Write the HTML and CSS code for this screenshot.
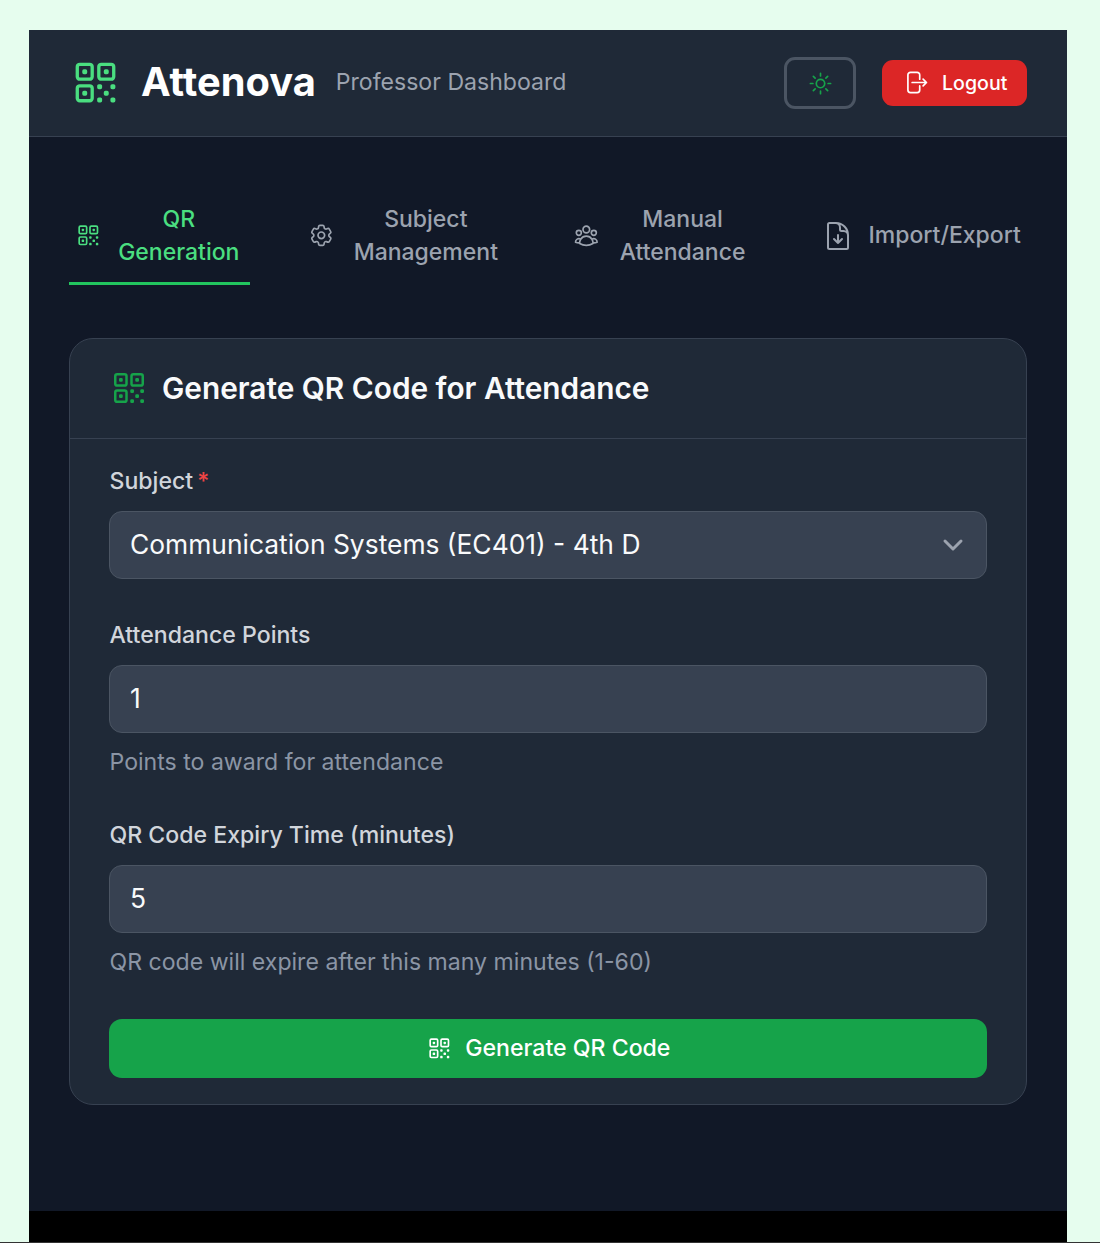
FILE: index.html
```html
<!DOCTYPE html>
<html lang="en">
<head>
  <meta charset="UTF-8">
  <meta name="viewport" content="width=device-width, initial-scale=1.0">
  <title>Attenova - Professor Dashboard</title>
  <link rel="stylesheet" href="styles.css">
</head>
<body>
  <svg class="icon-defs" width="0" height="0">
    <symbol id="qr" viewBox="0 0 24 24">
      <path d="M3.75 4.875c0-.621.504-1.125 1.125-1.125h4.5c.621 0 1.125.504 1.125 1.125v4.5c0 .621-.504 1.125-1.125 1.125h-4.5A1.125 1.125 0 0 1 3.75 9.375v-4.5ZM3.75 14.625c0-.621.504-1.125 1.125-1.125h4.5c.621 0 1.125.504 1.125 1.125v4.5c0 .621-.504 1.125-1.125 1.125h-4.5a1.125 1.125 0 0 1-1.125-1.125v-4.5ZM13.5 4.875c0-.621.504-1.125 1.125-1.125h4.5c.621 0 1.125.504 1.125 1.125v4.5c0 .621-.504 1.125-1.125 1.125h-4.5A1.125 1.125 0 0 1 13.5 9.375v-4.5Z"/>
      <path d="M6.75 6.75h.75v.75h-.75v-.75ZM6.75 16.5h.75v.75h-.75v-.75ZM16.5 6.75h.75v.75h-.75v-.75ZM13.5 13.5h.75v.75h-.75v-.75ZM13.5 19.5h.75v.75h-.75v-.75ZM19.5 13.5h.75v.75h-.75v-.75ZM19.5 19.5h.75v.75h-.75v-.75ZM16.5 16.5h.75v.75h-.75v-.75Z"/>
    </symbol>
    <symbol id="cog" viewBox="0 0 24 24">
      <path d="M9.594 3.94c.09-.542.56-.94 1.11-.94h2.593c.55 0 1.02.398 1.11.94l.213 1.281c.063.374.313.686.645.87.074.04.147.083.22.127.325.196.72.257 1.075.124l1.217-.456a1.125 1.125 0 0 1 1.37.49l1.296 2.247a1.125 1.125 0 0 1-.26 1.431l-1.003.827c-.293.241-.438.613-.43.992a7.723 7.723 0 0 1 0 .255c-.008.378.137.75.43.991l1.004.827c.424.35.534.955.26 1.43l-1.298 2.247a1.125 1.125 0 0 1-1.369.491l-1.217-.456c-.355-.133-.75-.072-1.076.124a6.47 6.47 0 0 1-.22.128c-.331.183-.581.495-.644.869l-.213 1.281c-.09.543-.56.94-1.11.94h-2.594c-.55 0-1.019-.398-1.11-.94l-.213-1.281c-.062-.374-.312-.686-.644-.87a6.52 6.52 0 0 1-.22-.127c-.325-.196-.72-.257-1.076-.124l-1.217.456a1.125 1.125 0 0 1-1.369-.49l-1.297-2.247a1.125 1.125 0 0 1 .26-1.431l1.004-.827c.292-.24.437-.613.43-.991a6.932 6.932 0 0 1 0-.255c.007-.38-.138-.751-.43-.992l-1.004-.827a1.125 1.125 0 0 1-.26-1.43l1.297-2.247a1.125 1.125 0 0 1 1.37-.491l1.216.456c.356.133.751.072 1.076-.124.072-.044.146-.086.22-.128.332-.183.582-.495.644-.869l.214-1.28Z"/>
      <path d="M15 12a3 3 0 1 1-6 0 3 3 0 0 1 6 0Z"/>
    </symbol>
    <symbol id="users" viewBox="0 0 24 24">
      <path d="M18 18.72a9.094 9.094 0 0 0 3.741-.479 3 3 0 0 0-4.682-2.72m.94 3.198.001.031c0 .225-.012.447-.037.666A11.944 11.944 0 0 1 12 21c-2.17 0-4.207-.576-5.963-1.584A6.062 6.062 0 0 1 6 18.719m12 0a5.971 5.971 0 0 0-.941-3.197m0 0A5.995 5.995 0 0 0 12 12.75a5.995 5.995 0 0 0-5.058 2.772m0 0a3 3 0 0 0-4.681 2.72 8.986 8.986 0 0 0 3.74.477m.94-3.197a5.971 5.971 0 0 0-.94 3.197M15 6.75a3 3 0 1 1-6 0 3 3 0 0 1 6 0Zm6 3a2.25 2.25 0 1 1-4.5 0 2.25 2.25 0 0 1 4.5 0Zm-13.5 0a2.25 2.25 0 1 1-4.5 0 2.25 2.25 0 0 1 4.5 0Z"/>
    </symbol>
    <symbol id="doc" viewBox="0 0 24 24">
      <path d="M19.5 14.25v-2.625a3.375 3.375 0 0 0-3.375-3.375h-1.5A1.125 1.125 0 0 1 13.5 7.125v-1.5a3.375 3.375 0 0 0-3.375-3.375H8.25m.75 12 3 3m0 0 3-3m-3 3v-6m-1.5-9H5.625c-.621 0-1.125.504-1.125 1.125v17.25c0 .621.504 1.125 1.125 1.125h12.75c.621 0 1.125-.504 1.125-1.125V11.25a9 9 0 0 0-9-9Z"/>
    </symbol>
    <symbol id="sun" viewBox="0 0 24 24">
      <path d="M12 3v2.25m6.364.386-1.591 1.591M21 12h-2.25m-.386 6.364-1.591-1.591M12 18.75V21m-4.773-4.227-1.591 1.591M5.25 12H3m4.227-4.773L5.636 5.636M15.75 12a3.75 3.75 0 1 1-7.5 0 3.75 3.75 0 0 1 7.5 0Z"/>
    </symbol>
    <symbol id="logout" viewBox="0 0 24 24">
      <path d="M15.75 9V5.25A2.25 2.25 0 0 0 13.5 3h-6a2.25 2.25 0 0 0-2.25 2.25v13.5A2.25 2.25 0 0 0 7.5 21h6a2.25 2.25 0 0 0 2.25-2.25V15m3 0 3-3m0 0-3-3m3 3H9"/>
    </symbol>
  </svg>

  <div class="app">
    <header class="topbar">
      <div class="brand">
        <svg class="icon brand-icon"><use href="#qr"/></svg>
        <h1>Attenova</h1>
        <span class="brand-sub">Professor Dashboard</span>
      </div>
      <div class="topbar-actions">
        <button type="button" class="theme-btn"><svg class="icon sun-icon"><use href="#sun"/></svg></button>
        <button type="button" class="logout-btn"><svg class="icon logout-icon"><use href="#logout"/></svg>Logout</button>
      </div>
    </header>

    <main class="content">
      <nav class="tabs">
        <a class="tab tab-qr active"><svg class="icon tab-icon"><use href="#qr"/></svg><span>QR<br>Generation</span></a>
        <a class="tab tab-subject"><svg class="icon tab-icon"><use href="#cog"/></svg><span>Subject<br>Management</span></a>
        <a class="tab tab-manual"><svg class="icon tab-icon"><use href="#users"/></svg><span>Manual<br>Attendance</span></a>
        <a class="tab tab-import"><svg class="icon doc-icon"><use href="#doc"/></svg><span>Import/Export</span></a>
      </nav>

      <section class="card">
        <div class="card-header">
          <svg class="icon card-icon"><use href="#qr"/></svg>
          <h2>Generate QR Code for Attendance</h2>
        </div>
        <form class="card-body">
          <div class="field field-first">
            <label for="subject">Subject<span class="required">*</span></label>
            <select id="subject" class="control select-control">
              <option>Communication Systems (EC401) - 4th D</option>
            </select>
          </div>
          <div class="field">
            <label for="points">Attendance Points</label>
            <input id="points" class="control" type="text" value="1">
            <p class="hint">Points to award for attendance</p>
          </div>
          <div class="field">
            <label for="expiry">QR Code Expiry Time (minutes)</label>
            <input id="expiry" class="control" type="text" value="5">
            <p class="hint">QR code will expire after this many minutes (1-60)</p>
          </div>
          <button type="button" class="generate-btn"><svg class="icon tab-icon"><use href="#qr"/></svg>Generate QR Code</button>
        </form>
      </section>
    </main>
    <div class="bottom-strip"></div>
  </div>
  <div class="page-edge"></div>
</body>
</html>
```

FILE: styles.css
```css
* {
  box-sizing: border-box;
}
body {
  margin: 0;
  padding: 30px 33px 0 29px;
  background: #e6fdee;
  font-family: Inter, "Noto Sans", sans-serif;
  color: #fff;
}
.icon-defs {
  display: block;
  height: 0;
}
.icon {
  fill: none;
  stroke: currentColor;
  stroke-width: 1.5;
  stroke-linecap: round;
  stroke-linejoin: round;
  flex-shrink: 0;
}
.app {
  display: flex;
  flex-direction: column;
  height: 1212px;
  background: #111827;
}
.page-edge {
  height: 1px;
  margin: 0 -33px 0 -29px;
  background: #333;
}

/* header */
.topbar {
  display: flex;
  justify-content: space-between;
  align-items: center;
  height: 107px;
  padding: 0 40px;
  background: #1f2937;
  border-bottom: 1px solid #374151;
}
.brand {
  display: flex;
  align-items: center;
  padding-bottom: 2px;
}
.brand-icon {
  width: 53px;
  height: 53px;
  color: #4ade80;
  margin: 0 19px 0 0;
}
.brand h1 {
  margin: 0 20px 2px 0;
  font-size: 39.8px;
  font-weight: 700;
  line-height: 51px;
}
.brand-sub {
  font-size: 23.1px;
  color: #9ca3af;
}
.topbar-actions {
  display: flex;
  align-items: center;
  gap: 26px;
}
.theme-btn {
  display: flex;
  align-items: center;
  justify-content: center;
  width: 72px;
  height: 52px;
  padding: 0;
  background: none;
  border: 3px solid #4b5563;
  border-radius: 11px;
  color: #16a34a;
}
.sun-icon {
  width: 27px;
  height: 27px;
}
.logout-btn {
  display: flex;
  align-items: center;
  gap: 13px;
  width: 145px;
  height: 46px;
  padding: 0 0 1px 20px;
  background: #dc2626;
  border: none;
  border-radius: 11px;
  color: #fff;
  font: 500 19.6px Inter, sans-serif;
}
.logout-icon {
  width: 27px;
  height: 27px;
}

/* tabs */
.content {
  flex: 1;
  padding: 52px 40px 0;
}
.tabs {
  display: flex;
  width: 962px;
  height: 96px;
  margin-bottom: 53px;
}
.tab {
  display: flex;
  align-items: center;
  gap: 19px;
  height: 96px;
  border-bottom: 3px solid transparent;
  color: #9ca3af;
  font-size: 23px;
  font-weight: 500;
  line-height: 33px;
  text-align: center;
}
.tab.active {
  color: #4ade80;
  border-bottom-color: #22c55e;
}
.tab-qr {
  width: 181px;
  padding-left: 6px;
  gap: 16.5px;
}
.tab-subject {
  width: 207px;
  margin-left: 58px;
}
.tab-manual {
  margin-left: 58px;
  gap: 20px;
}
.tab-import {
  margin-left: 76px;
  gap: 15px;
}
.tab-icon {
  width: 26.67px;
  height: 26.67px;
}
.doc-icon {
  width: 32px;
  height: 32px;
}

/* card */
.card {
  background: #1f2937;
  border: 1px solid #374151;
  border-radius: 24px;
}
.card-header {
  display: flex;
  align-items: center;
  gap: 13px;
  height: 100px;
  padding: 0 39px 2px;
  border-bottom: 1px solid #374151;
}
.card-icon {
  width: 40px;
  height: 40px;
  color: #16a34a;
}
.card-header h2 {
  margin: 0;
  font-size: 29.8px;
  font-weight: 600;
  color: #f9fafb;
}
.card-body {
  display: flex;
  flex-direction: column;
  padding: 26px 39px 26px;
}
.field {
  margin-bottom: 41px;
}
.field-first {
  margin-bottom: 40px;
}
.field label {
  display: block;
  margin-bottom: 14px;
  padding-left: 0.5px;
  font-size: 23.1px;
  font-weight: 500;
  line-height: 32px;
  color: #d1d5db;
}
.required {
  margin-left: 4px;
  color: #ef4444;
}
.control {
  display: block;
  width: 100%;
  height: 68px;
  padding: 0 20px 2px;
  background-color: #374151;
  border: 1px solid #4b5563;
  border-radius: 13px;
  color: #f9fafb;
  font: 400 26.4px Inter, sans-serif;
  outline: none;
}
.select-control {
  appearance: none;
  background-image: url("data:image/svg+xml,%3csvg xmlns='http://www.w3.org/2000/svg' fill='none' viewBox='0 0 20 20'%3e%3cpath stroke='%239ca3af' stroke-linecap='round' stroke-linejoin='round' stroke-width='1.5' d='M6 8l4 4 4-4'/%3e%3c/svg%3e");
  background-repeat: no-repeat;
  background-position: right 13px center;
  background-size: 40px 40px;
}
.hint {
  margin: 13px 0 0;
  padding-left: 0.5px;
  font-size: 23.1px;
  line-height: 32px;
  color: #8b95a5;
}
.generate-btn {
  display: flex;
  align-items: center;
  justify-content: center;
  gap: 13px;
  width: 100%;
  height: 59px;
  padding-bottom: 2px;
  background: #16a34a;
  border: none;
  border-radius: 13px;
  color: #fff;
  font: 500 23.1px Inter, sans-serif;
}
.bottom-strip {
  height: 31px;
  background: #000;
}
```
